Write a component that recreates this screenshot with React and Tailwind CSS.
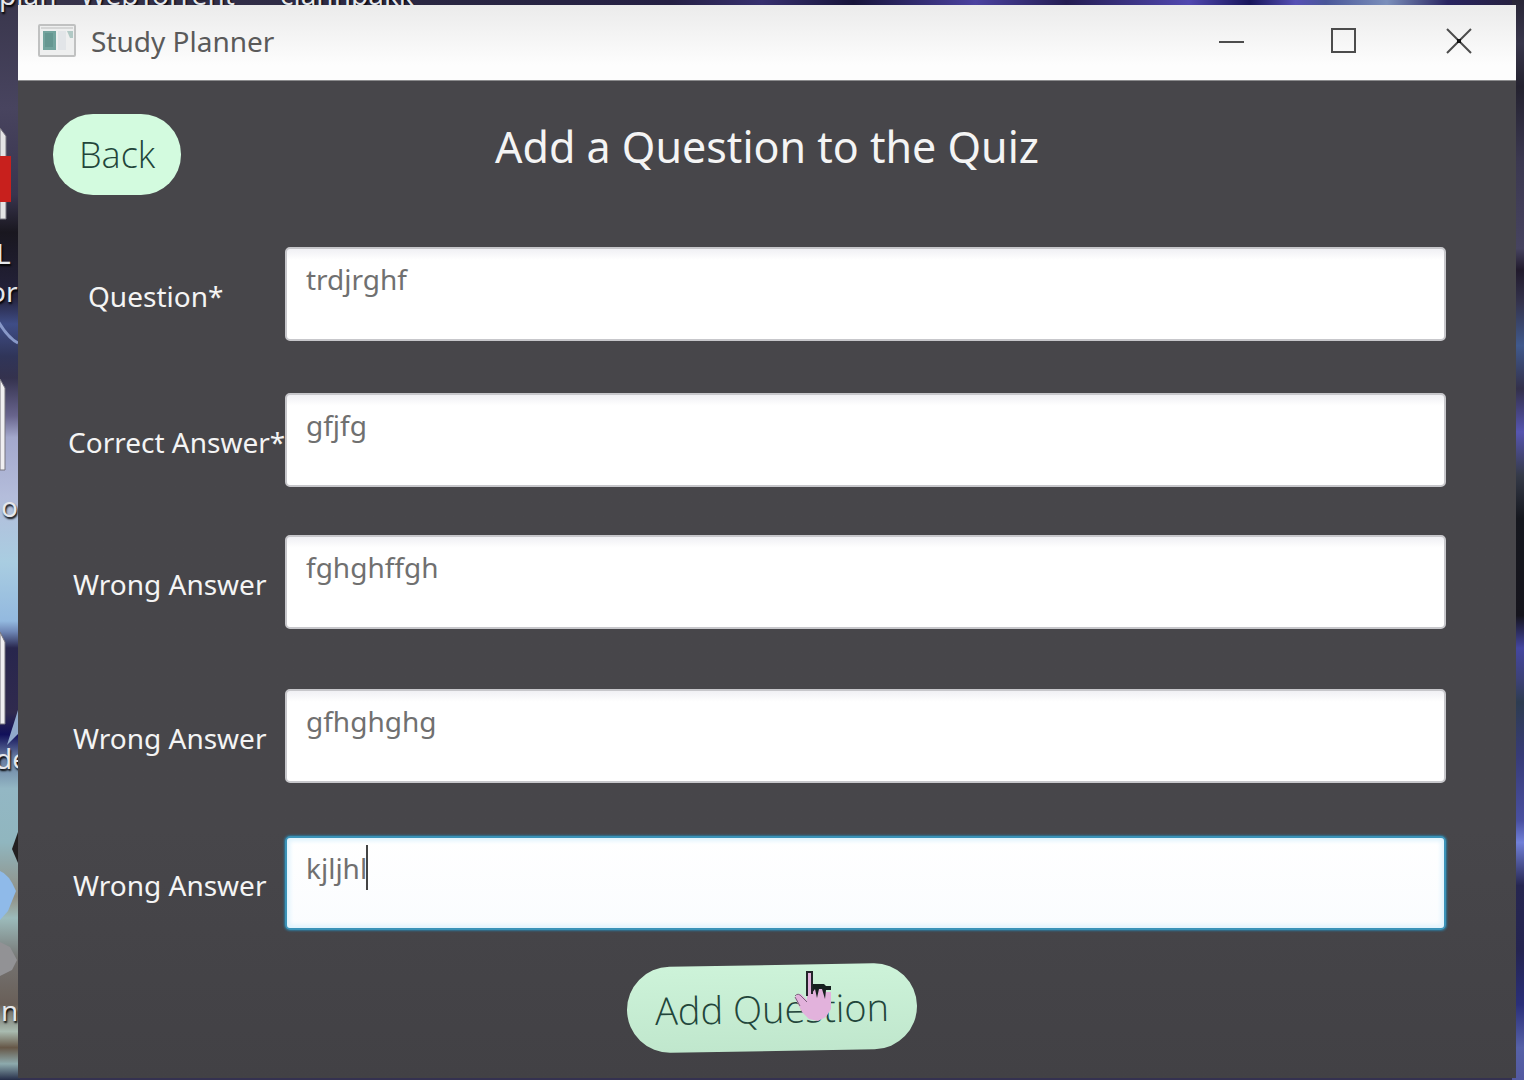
import React from "react";

const fields = [
  { id: "question", label: "Question*", value: "trdjrghf", row: "", pad: "pl-5" },
  { id: "correct", label: "Correct Answer*", value: "gfjfg", row: "mt-[52px]", pad: "pl-0" },
  { id: "wrong-1", label: "Wrong Answer", value: "fghghffgh", row: "mt-12", pad: "pl-[5px]" },
  { id: "wrong-2", label: "Wrong Answer", value: "gfhghghg", row: "mt-[60px]", pad: "pl-[5px]" },
  { id: "wrong-3", label: "Wrong Answer", value: "kjljhl", row: "mt-[53px]", pad: "pl-[5px]", active: true },
];

const desktopText =
  "absolute whitespace-nowrap text-[28px] leading-7 text-gray-200 [text-shadow:1px_2px_2px_#000]";

function Wallpaper() {
  return (
    <div className="absolute inset-0 overflow-hidden bg-[#343150]" aria-hidden="true">
      <div className="absolute inset-x-0 top-0 h-2 bg-[linear-gradient(90deg,#39354c_0%,#292642_30%,#252044_44%,#37306f_50%,#17143a_56%,#4b42a0_64%,#241d52_70%,#5148b0_78%,#17155a_82%,#5650b5_85%,#4a5799_87%,#7b8fbb_91%,#292460_95%,#25203a_100%)]" />
      <div className="absolute inset-y-0 right-0 w-3 bg-[linear-gradient(180deg,#292637_0%,#38364b_4%,#24222f_8%,#3b3850_15%,#46435f_23%,#211a2c_25%,#34334c_28%,#40598c_32%,#33304a_36%,#5655b0_40%,#353a48_44%,#15171e_48%,#15141c_57%,#4446a0_60%,#3c4175_63%,#2d3c50_65%,#373b77_70%,#4950a0_76%,#7180d8_78%,#262650_82%,#242450_88%,#2a2f79_93%,#5661a7_97%,#5359a0_100%)]" />
      <svg className="absolute left-0 top-0" width="20" height="1080" viewBox="0 0 20 1080">
        <defs>
          <linearGradient id="strip" x1="0" y1="0" x2="0" y2="1">
            <stop offset="0" stopColor="#39364c" />
            <stop offset=".1" stopColor="#48445f" />
            <stop offset=".18" stopColor="#39354e" />
            <stop offset=".215" stopColor="#19171f" />
            <stop offset=".275" stopColor="#24223c" />
            <stop offset=".3" stopColor="#3f4d86" />
            <stop offset=".33" stopColor="#303559" />
            <stop offset=".35" stopColor="#34324e" />
            <stop offset=".385" stopColor="#68648d" />
            <stop offset=".405" stopColor="#a3a8cc" />
            <stop offset=".46" stopColor="#b4bddb" />
            <stop offset=".52" stopColor="#a9cde1" />
            <stop offset=".575" stopColor="#93b9df" />
            <stop offset=".585" stopColor="#6e86b5" />
            <stop offset=".6" stopColor="#28264d" />
            <stop offset=".66" stopColor="#302a4e" />
            <stop offset=".68" stopColor="#11105a" />
            <stop offset=".7" stopColor="#64779d" />
            <stop offset=".73" stopColor="#93b7c4" />
            <stop offset=".78" stopColor="#90b6bf" />
            <stop offset=".83" stopColor="#918f84" />
            <stop offset=".85" stopColor="#9cbbbb" />
            <stop offset=".89" stopColor="#747270" />
            <stop offset=".93" stopColor="#695f58" />
            <stop offset=".955" stopColor="#a9bbb0" />
            <stop offset=".97" stopColor="#665747" />
            <stop offset=".985" stopColor="#8daaad" />
            <stop offset="1" stopColor="#252d48" />
          </linearGradient>
        </defs>
        <rect width="20" height="1080" fill="url(#strip)" />
        <path d="M-2 321q10 17 20 22" stroke="#8999c9" strokeWidth="3" fill="none" />
        <path d="M0 128l6 8v83H0z" fill="#e4e4e5" stroke="#77747e" />
        <path d="M0 156h11v46H0z" fill="#c8201d" />
        <path d="M0 379l5 9v82H0z" fill="#f0eff1" stroke="#77747e" />
        <path d="M0 632l5 10v82H0z" fill="#f0eff1" stroke="#77747e" />
        <path d="M7 745l11-35v24z" fill="#91aacb" />
        <path d="M18 832l-6 17 6 14z" fill="#232021" />
        <path d="M0 871q9 3 16 20l-8 20-8 9z" fill="#8fbae9" />
        <path d="M0 942l10 5 7 13-5 10-12 6z" fill="#929295" />
      </svg>
      <span className={`${desktopText} left-[-1px] top-[-20px]`}>plan</span>
      <span className={`${desktopText} left-20 top-[-20px]`}>WebTorrent</span>
      <span className={`${desktopText} left-[280px] top-[-20px]`}>clannpakk</span>
      <span className={`${desktopText} left-[-4px] top-[239px]`}>L</span>
      <span className={`${desktopText} left-[-11px] top-[277px]`}>or</span>
      <span className={`${desktopText} left-px top-[492px]`}>o</span>
      <span className={`${desktopText} left-[-5px] top-[744px]`}>de</span>
      <span className={`${desktopText} left-px top-[996px]`}>n</span>
    </div>
  );
}

function AppIcon() {
  return (
    <svg width="38" height="34" viewBox="0 0 38 34" aria-hidden="true">
      <rect x="1" y="1" width="36" height="31" rx="1" fill="#eeefef" stroke="#c0c1c1" strokeWidth="2" />
      <path d="M3 4h32" stroke="#d5d6d6" strokeWidth="2" />
      <rect x="5" y="7" width="13" height="19" fill="#73a49e" />
      <path d="M7 9h8v14H7z" fill="#659791" />
      <rect x="20" y="7" width="8" height="19" fill="#e2e5e8" />
      <path d="M29 7h6v7h-3z" fill="#b1c9c5" />
    </svg>
  );
}

function TitleBar() {
  return (
    <header className="flex h-[76px] items-center justify-between border-b border-[#8b8b8d] bg-linear-to-b from-[#ebebeb] to-[#fdfdfd] to-80% pl-5 pr-[43px] pb-1">
      <div className="flex items-center gap-[15px]">
        <AppIcon />
        <span className="text-[28px] leading-10 text-[#5a5a5a]">Study Planner</span>
      </div>
      <div className="flex items-center text-[#4c4c4c]">
        <button type="button" aria-label="Minimize" className="mr-[84px]">
          <svg width="28" height="28" viewBox="0 0 28 28" fill="none" stroke="currentColor" strokeWidth="2">
            <path d="M1 15h25" />
          </svg>
        </button>
        <button type="button" aria-label="Maximize" className="mr-[87px]">
          <svg width="28" height="28" viewBox="0 0 28 28" fill="none" stroke="currentColor" strokeWidth="2">
            <path d="M2 2h23v23H2z" />
          </svg>
        </button>
        <button type="button" aria-label="Close">
          <svg width="28" height="28" viewBox="0 0 28 28" fill="none" stroke="currentColor" strokeWidth="2">
            <path d="M2 2l24 24M26 2L2 26" />
            <path d="M12 12h4v4h-4z" fill="#111" stroke="none" />
          </svg>
        </button>
      </div>
    </header>
  );
}

function Field({ id, label, value, row, pad, active }) {
  return (
    <div className={`grid grid-cols-[217px_1fr] items-center ${row}`}>
      <label htmlFor={id} className={`whitespace-nowrap pt-1 text-[28px] leading-10 text-[#f4f4f4] ${pad}`}>
        {label}
      </label>
      <div className="relative">
        <textarea
          id={id}
          defaultValue={value}
          spellCheck={false}
          className={`block h-[94px] w-full resize-none overflow-hidden rounded-[5px] border-2 px-[19px] py-[10px] text-[28px] leading-10 text-[#707070] caret-transparent outline-none ${
            active
              ? "border-[#3b93b8] bg-linear-to-b from-white to-[#fafcfe] shadow-[inset_0_0_4px_3px_#dff3fd,0_0_2px_1px_#2f7494]"
              : "border-[#c7c7cb] bg-linear-to-b from-[#f0f0f4] to-white to-12%"
          }`}
        />
        {active && <span className="absolute left-[81px] top-[9px] h-[45px] w-[2px] bg-[#444]" />}
      </div>
    </div>
  );
}

function HandCursor() {
  return (
    <svg className="pointer-events-none absolute left-[166px] top-1" width="42" height="54" viewBox="0 0 42 54" aria-hidden="true">
      <path
        d="M14 3h5v14h5l2 3h5l2 3h5v17l-5 8-8 4-9-2-7-7-7-14 2-4h4l6 6z"
        fill="#e2b2dc"
      />
      <path d="M19 15h12l2 2h5v4h-5l-1 9-3-10h-3l-2 9-2-9-3 4z" fill="#16201f" />
      <path d="M14 27V3h5v22" fill="none" stroke="#23252a" strokeWidth="2" />
      <path d="M2 27q3-4 7 1l5 5M2 28l5 9" fill="none" stroke="#7a607b" strokeWidth="1" />
    </svg>
  );
}

export default function App() {
  return (
    <div className="relative flex min-h-screen flex-col pb-[2px] pl-[18px] pr-2 pt-[5px] font-['Noto_Sans','Open_Sans',sans-serif]">
      <Wallpaper />
      <div className="relative flex flex-1 flex-col bg-[#47464a]">
        <TitleBar />
        <main className="flex flex-1 flex-col bg-linear-to-b from-[#47464a] from-75% to-[#424145] pb-6">
          <div className="grid grid-cols-[1fr_auto_1fr] items-start pl-[35px] pr-[35px] pt-[33px]">
            <button
              type="button"
              className="h-[81px] justify-self-start rounded-[40px] bg-[#d3fbdf] px-[26px] font-['Open_Sans',sans-serif] text-[36px] font-[340] text-[#22453a]"
            >
              Back
            </button>
            <h1 className="pt-1 text-[43px] leading-[58px] text-[#f4f4f4]">Add a Question to the Quiz</h1>
          </div>
          <form className="flex flex-col pl-[50px] pr-[70px] pt-[52px]" onSubmit={(e) => e.preventDefault()}>
            {fields.map((f) => (
              <Field key={f.id} {...f} />
            ))}
            <div className="relative ml-[559px] mt-[35px] self-start">
              <button
                type="submit"
                className="h-[86px] -rotate-1 rounded-[43px] bg-linear-to-b from-[#cdf3d9] to-[#c0e7cd] px-7 font-['Open_Sans',sans-serif] text-[38px] font-[340] text-[#22453a]"
              >
                Add Question
              </button>
              <HandCursor />
            </div>
          </form>
        </main>
      </div>
    </div>
  );
}
